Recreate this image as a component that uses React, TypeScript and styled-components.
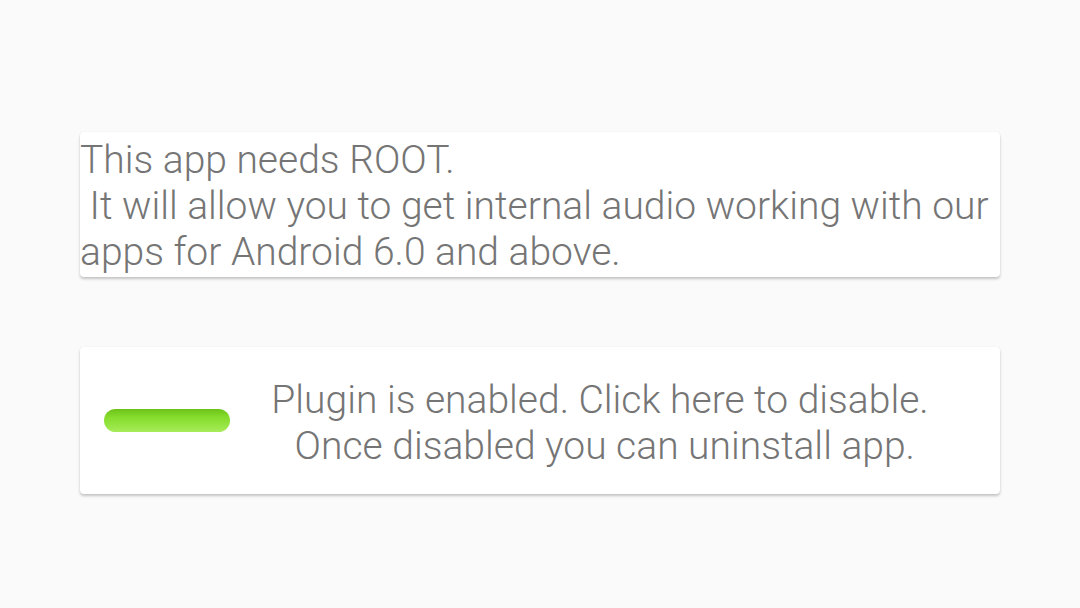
import React from "react";
import styled, { createGlobalStyle } from "styled-components";

const Global = createGlobalStyle`
  html, body { margin: 0; padding: 0; background: #fafafa; }
  body { font-family: Roboto, "Noto Sans", sans-serif; }
`;

const Page = styled.div`
  width: 1080px;
  height: 608px;
  background: #fafafa;
  display: flex;
  flex-direction: column;
  align-items: center;
  padding-top: 132px;
  box-sizing: border-box;
  gap: 70px;
`;

const Card = styled.div<{ $h: number }>`
  width: 920px;
  height: ${(p) => p.$h}px;
  background: #ffffff;
  border-radius: 4px;
  box-shadow: 0 2px 3px rgba(0, 0, 0, 0.22), 0 0 1px rgba(0, 0, 0, 0.08);
  box-sizing: border-box;
`;

const Message = styled.div`
  font-family: Roboto, sans-serif;
  font-weight: 300;
  font-size: 39px;
  line-height: 46px;
  color: #757575;
  white-space: pre-wrap;
  padding-top: 5px;
`;

const Row = styled.div`
  height: 100%;
  display: flex;
  align-items: center;
  padding-left: 24px;
  box-sizing: border-box;
`;

const Toggle = styled.div`
  width: 126px;
  height: 23px;
  border-radius: 12px;
  background: linear-gradient(to bottom, #6cc218 0%, #86dc2c 35%, #98e646 75%, #a8ec5c 100%);
  flex-shrink: 0;
`;

const Status = styled.div`
  flex: 1;
  text-align: center;
  font-family: Roboto, sans-serif;
  font-weight: 300;
  font-size: 39px;
  line-height: 46px;
  color: #757575;
  white-space: pre-wrap;
  padding-top: 5px;
  padding-right: 30px;
`;

export default function App() {
  return (
    <>
      <Global />
      <Page>
        <Card $h={145}>
          <Message>
            {"This app needs ROOT.\n It will allow you to get internal audio working with our\napps for Android 6.0 and above."}
          </Message>
        </Card>
        <Card $h={147}>
          <Row>
            <Toggle />
            <Status>
              {"Plugin is enabled. Click here to disable.\n Once disabled you can uninstall app."}
            </Status>
          </Row>
        </Card>
      </Page>
    </>
  );
}
